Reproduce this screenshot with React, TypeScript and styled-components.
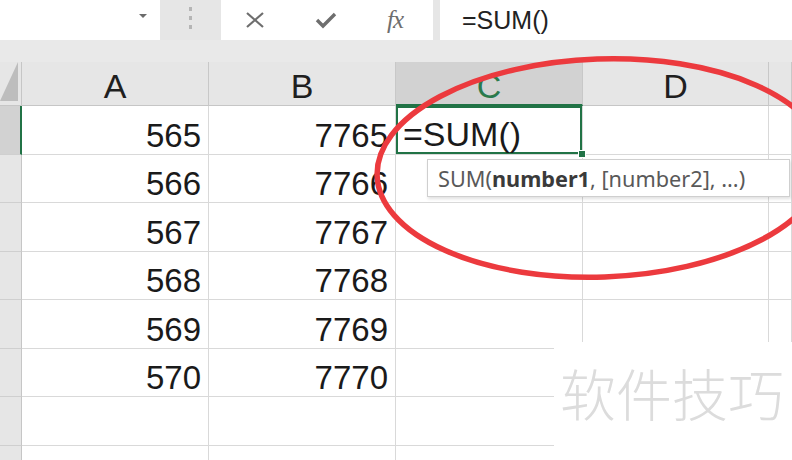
import React from "react";
import styled, { createGlobalStyle } from "styled-components";

const GlobalStyle = createGlobalStyle`
  html, body {
    margin: 0;
    padding: 0;
    background: #ffffff;
  }
  body {
    font-family: "Liberation Sans", Arial, sans-serif;
  }
`;

const GREEN = "#217346";
const GRID = "#d9d9d9";
const HEAD = "#e6e6e6";

const Page = styled.div`
  position: relative;
  width: 792px;
  height: 460px;
  overflow: hidden;
  background: ${HEAD};
  display: flex;
  flex-direction: column;
`;

const FormulaBar = styled.div`
  height: 40px;
  display: flex;
  align-items: stretch;
  flex-shrink: 0;
`;

const NameBox = styled.div`
  width: 160px;
  background: #ffffff;
  display: flex;
  align-items: flex-start;
  justify-content: flex-end;
  padding: 14px 13px 0 0;
  box-sizing: border-box;
`;

const Caret = styled.span`
  width: 0;
  height: 0;
  border-left: 4px solid transparent;
  border-right: 4px solid transparent;
  border-top: 4px solid #6b6b6b;
`;

const Grip = styled.div`
  width: 61px;
  display: flex;
  flex-direction: column;
  align-items: center;
  gap: 5px;
  padding-top: 7px;
  box-sizing: border-box;

  span {
    width: 3px;
    height: 4px;
    background: #b5b5b5;
  }
`;

const ActionBox = styled.div`
  width: 212px;
  background: #ffffff;
  display: flex;
  align-items: center;
  padding-left: 24px;
  gap: 50px;
  box-sizing: border-box;
`;

const Fx = styled.span`
  font-family: "Liberation Serif", "Times New Roman", serif;
  font-style: italic;
  font-size: 25px;
  color: #6e6e6e;
  margin-left: 0px;
  letter-spacing: -1px;
`;

const FormulaInput = styled.div`
  flex: 1;
  margin-left: 7px;
  background: #ffffff;
  display: flex;
  align-items: center;
  padding-left: 22px;
  font-size: 25px;
  color: #222222;
`;

const Band = styled.div`
  height: 22px;
  flex-shrink: 0;
  background: #e9e9e9;
`;

const Sheet = styled.div`
  flex: 1;
  background: #ffffff;
  display: grid;
  grid-template-columns: 22px 187px 187px 187px 186px 1fr;
  grid-template-rows: 44px;
  grid-auto-rows: 48.5px;
`;

const Corner = styled.div`
  background: ${HEAD};
  border-right: 1px solid #c6c6c6;
  border-bottom: 1px solid #c6c6c6;
  box-sizing: border-box;
  display: flex;
  align-items: flex-end;
  padding-bottom: 4px;

  &::before {
    content: "";
    width: 0;
    height: 0;
    border-left: 18px solid transparent;
    border-bottom: 39px solid #bdbdbd;
  }
`;

const ColHead = styled.div<{ $active?: boolean }>`
  background: ${(p) => (p.$active ? "#d2d2d2" : HEAD)};
  color: ${(p) => (p.$active ? "#2a7a4c" : "#1f1f1f")};
  border-right: 1px solid #c8c8c8;
  border-bottom: ${(p) => (p.$active ? `2px solid ${GREEN}` : "1px solid #c6c6c6")};
  box-sizing: border-box;
  display: flex;
  align-items: flex-end;
  justify-content: center;
  font-size: 34px;
  line-height: 1;
  padding-bottom: ${(p) => (p.$active ? "1px" : "2px")};
`;

const RowHead = styled.div<{ $active?: boolean }>`
  background: ${(p) => (p.$active ? "#d2d2d2" : HEAD)};
  border-right: ${(p) => (p.$active ? `2px solid ${GREEN}` : "1px solid #c6c6c6")};
  border-bottom: 1px solid #cfcfcf;
  box-sizing: border-box;
`;

const Cell = styled.div<{ $active?: boolean; $align?: "left" | "right" }>`
  position: relative;
  border-right: 1px solid ${GRID};
  border-bottom: 1px solid ${GRID};
  box-sizing: border-box;
  display: flex;
  align-items: flex-end;
  justify-content: ${(p) => (p.$align === "left" ? "flex-start" : "flex-end")};
  padding: 0 7px 2px 7px;
  font-size: 33px;
  line-height: 1;
  color: #1a1a1a;
  white-space: nowrap;
  ${(p) =>
    p.$active &&
    `
    box-shadow: inset 0 0 0 2px ${GREEN};
    z-index: 1;
    padding-left: 7px;
    padding-bottom: 3px;
    font-size: 34px;
    &::after {
      content: "";
      position: absolute;
      right: -4px;
      bottom: -4px;
      width: 6px;
      height: 6px;
      background: ${GREEN};
      border: 1px solid #ffffff;
    }
  `}
`;

const Tooltip = styled.div`
  position: absolute;
  left: 427px;
  top: 159px;
  width: 363px;
  height: 38px;
  box-sizing: border-box;
  background: #ffffff;
  border: 1px solid #cfcfcf;
  box-shadow: 1px 2px 3px rgba(0, 0, 0, 0.12);
  display: flex;
  align-items: center;
  padding-left: 10px;
  font-family: "Noto Sans", "Liberation Sans", sans-serif;
  font-size: 21.7px;
  color: #595959;
  white-space: nowrap;
  z-index: 2;

  b {
    color: #3a3a3a;
    font-weight: 700;
  }
`;

const Watermark = styled.div`
  position: absolute;
  left: 554px;
  top: 342px;
  right: 0;
  bottom: 0;
  background: #ffffff;
  display: flex;
  align-items: flex-start;
  padding: 22px 0 0 6px;
  box-sizing: border-box;
  font-family: "Noto Sans CJK SC", "Noto Sans", sans-serif;
  font-size: 56px;
  font-weight: 300;
  line-height: 1;
  color: #dcdcdc;
  z-index: 3;
`;

const Annotation = styled.svg`
  position: absolute;
  left: 0;
  top: 0;
  width: 792px;
  height: 460px;
  pointer-events: none;
  z-index: 4;
`;

const rows: [string, string][] = [
  ["565", "7765"],
  ["566", "7766"],
  ["567", "7767"],
  ["568", "7768"],
  ["569", "7769"],
  ["570", "7770"],
  ["", ""],
  ["", ""],
];

const CloseIcon = () => (
  <svg width="20" height="16" viewBox="0 0 20 16">
    <path d="M2 1 L18 15 M18 1 L2 15" stroke="#6e6e6e" strokeWidth="2.2" fill="none" />
  </svg>
);

const CheckIcon = () => (
  <svg width="22" height="18" viewBox="0 0 22 18">
    <path d="M2 9 L8 15 L20 3" stroke="#6e6e6e" strokeWidth="3.4" fill="none" strokeLinejoin="miter" />
  </svg>
);

const App = () => {
  return (
    <Page>
      <GlobalStyle />
      <FormulaBar>
        <NameBox>
          <Caret />
        </NameBox>
        <Grip>
          <span />
          <span />
          <span />
        </Grip>
        <ActionBox>
          <CloseIcon />
          <CheckIcon />
          <Fx>fx</Fx>
        </ActionBox>
        <FormulaInput>=SUM()</FormulaInput>
      </FormulaBar>
      <Band />
      <Sheet>
        <Corner />
        <ColHead>A</ColHead>
        <ColHead>B</ColHead>
        <ColHead $active>C</ColHead>
        <ColHead>D</ColHead>
        <ColHead />
        {rows.map(([a, b], i) => (
          <React.Fragment key={i}>
            <RowHead $active={i === 0} />
            <Cell>{a}</Cell>
            <Cell>{b}</Cell>
            <Cell $active={i === 0} $align="left">
              {i === 0 ? "=SUM()" : ""}
            </Cell>
            <Cell />
            <Cell />
          </React.Fragment>
        ))}
      </Sheet>
      <Tooltip>
        SUM(<b>number1</b>, [number2], ...)
      </Tooltip>
      <Watermark>软件技巧</Watermark>
      <Annotation viewBox="0 0 792 460">
        <ellipse
          cx="601"
          cy="168"
          rx="224"
          ry="109"
          transform="rotate(-2 601 168)"
          fill="none"
          stroke="#ec3a3e"
          strokeWidth="5.5"
        />
      </Annotation>
    </Page>
  );
};

export default App;
